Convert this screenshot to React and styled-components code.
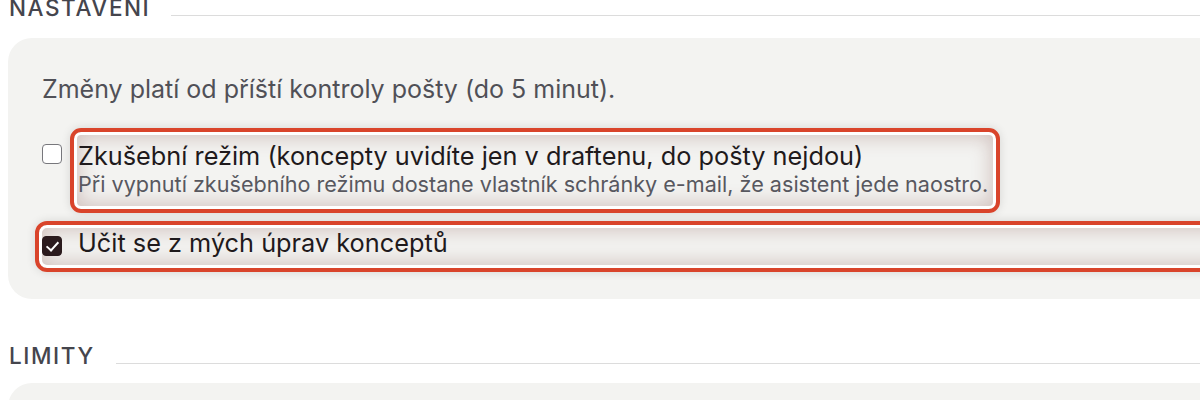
import styled, { createGlobalStyle } from "styled-components";

const COLOR = {
  card: "#f3f3f1",
  rule: "#dcdcdc",
  heading: "#45454d",
  muted: "#505057",
  text: "#1f1a1c",
  hint: "#58585f",
  mark: "#d9442b",
  checked: "#2b1b1e",
};

const GlobalStyle = createGlobalStyle`
  body {
    margin: 0;
    background: #fff;
    overflow: hidden;
    font-family: Inter, "Noto Sans", "DejaVu Sans", sans-serif;
  }
`;

const Page = styled.div`
  width: 1400px;
  padding-left: 8px;
  margin-top: -6px;
`;

const SectionHeader = styled.div`
  display: flex;
  align-items: flex-end;
  gap: 21px;
  margin: ${({ first }) => (first ? "0 0 16px" : "43px 0 13px")};
  padding-left: 1px;

  > h2 {
    margin: 0;
    font-size: 22.5px;
    line-height: 28px;
    font-weight: 500;
    letter-spacing: 0.07em;
    text-transform: uppercase;
    color: ${COLOR.heading};
  }
  > span {
    flex: 1;
    height: 1.5px;
    margin-bottom: 6px;
    background: ${COLOR.rule};
  }
`;

const Card = styled.div`
  background: ${COLOR.card};
  border-radius: 24px;
  padding: ${({ empty }) => (empty ? "40px 34px" : "34px 34px 27px")};
`;

const Note = styled.p`
  margin: 0 0 21px;
  font-size: 25px;
  line-height: 35px;
  color: ${COLOR.muted};
`;

const Row = styled.label`
  display: flex;
  align-items: flex-start;
  gap: ${({ wide }) => (wide ? "16px" : "8px")};
`;

const Mark = styled.div`
  border: 4px solid ${COLOR.mark};
  border-radius: 11px;
  box-shadow:
    inset 0 0 0 3px #fff,
    inset 0 0 18px 6px rgba(125, 70, 60, 0.26),
    0 0 10px rgba(0, 0, 0, 0.12);
`;

const OptionMark = styled(Mark)`
  padding: 9px 8px 12px 4px;
`;

const RowMark = styled(Mark)`
  margin: 8px -7px 0;
  padding: 3px 3px 10px;
  border-radius: 12px 0 0 12px;
`;

const Box = styled.span`
  flex: none;
  position: relative;
  width: 20px;
  height: 20px;
  box-sizing: border-box;
  margin-top: ${({ offset }) => offset || 0}px;
  border-radius: 4px;
  border: 1.5px solid ${({ checked }) => (checked ? COLOR.checked : "#77777c")};
  background: ${({ checked }) => (checked ? COLOR.checked : "#fff")};

  &::after {
    content: "";
    display: ${({ checked }) => (checked ? "block" : "none")};
    position: absolute;
    left: 5.5px;
    top: 1.5px;
    width: 5px;
    height: 10px;
    border: solid #fff;
    border-width: 0 2.5px 2.5px 0;
    transform: rotate(42deg);
  }
`;

const Label = styled.div`
  font-size: 25.3px;
  line-height: 30px;
  color: ${COLOR.text};
`;

const Hint = styled.div`
  font-size: 21.6px;
  line-height: 26px;
  color: ${COLOR.hint};
`;

const Checkbox = ({ checked, offset }) => (
  <Box checked={checked} offset={offset} role="checkbox" aria-checked={checked} />
);

export default function App() {
  return (
    <>
      <GlobalStyle />
      <Page>
        <SectionHeader first>
          <h2>Nastavení</h2>
          <span />
        </SectionHeader>
        <Card>
          <Note>Změny platí od příští kontroly pošty (do 5 minut).</Note>
          <Row>
            <Checkbox offset={16} />
            <OptionMark>
              <Label>Zkušební režim (koncepty uvidíte jen v draftenu, do pošty nejdou)</Label>
              <Hint>Při vypnutí zkušebního režimu dostane vlastník schránky e-mail, že asistent jede naostro.</Hint>
            </OptionMark>
          </Row>
          <RowMark>
            <Row wide>
              <Checkbox checked offset={8} />
              <Label>Učit se z mých úprav konceptů</Label>
            </Row>
          </RowMark>
        </Card>
        <SectionHeader>
          <h2>Limity</h2>
          <span />
        </SectionHeader>
        <Card empty />
      </Page>
    </>
  );
}
